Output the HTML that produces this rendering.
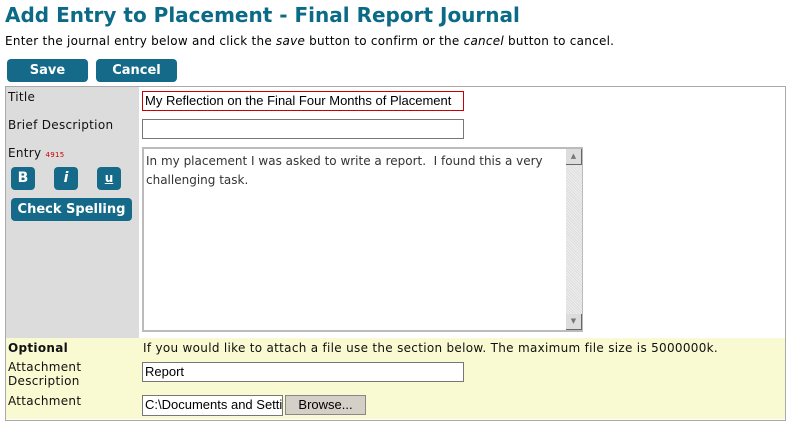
<!DOCTYPE html>
<html><head><style>
body{margin:0;width:790px;height:424px;background:#fff;font-family:"DejaVu Sans",Verdana,sans-serif;position:relative;overflow:hidden}
.a{position:absolute}
h1{position:absolute;left:5px;top:3px;margin:0;font-size:20px;font-weight:bold;color:#0b6a86;letter-spacing:0}
.btn{position:absolute;background:#156a8a;color:#fff;font-weight:bold;font-size:13px;text-align:center;border-radius:4px;font-family:"DejaVu Sans",sans-serif}
.lbl{position:absolute;font-size:12px;color:#111;letter-spacing:0.3px}
.inp{position:absolute;background:#fff;border:1px solid #777;box-sizing:border-box;font-family:"Liberation Sans",sans-serif;font-size:13px;padding:1px 2px;color:#000}
</style></head><body>
<h1>Add Entry to Placement - Final Report Journal</h1>
<div class="a" style="left:5px;top:34px;font-size:12px;letter-spacing:0.25px">Enter the journal entry below and click the <i>save</i> button to confirm or the <i>cancel</i> button to cancel.</div>
<div class="btn" style="left:7px;top:59px;width:81px;height:23px;line-height:23px">Save</div>
<div class="btn" style="left:96px;top:59px;width:81px;height:23px;line-height:23px">Cancel</div>
<div class="a" style="left:5px;top:86px;width:779px;height:333px;border:1px solid #aaa;background:#fff"></div>
<div class="a" style="left:6px;top:87px;width:133px;height:251px;background:#dcdcdc"></div>
<div class="a" style="left:6px;top:338px;width:779px;height:81px;background:#fafad2"></div>
<div class="lbl" style="left:8px;top:90px">Title</div>
<div class="lbl" style="left:8px;top:118px">Brief Description</div>
<div class="lbl" style="left:8px;top:146px">Entry <span style="color:#c00;font-size:7px">4915</span></div>
<div class="btn" style="left:11px;top:167px;width:24px;height:23px;line-height:23px;font-size:14px">B</div>
<div class="btn" style="left:54px;top:167px;width:24px;height:23px;line-height:23px;font-size:14px;font-style:italic">i</div>
<div class="btn" style="left:97px;top:167px;width:24px;height:23px;line-height:22px;font-size:12px;text-decoration:underline">u</div>
<div class="btn" style="left:11px;top:198px;width:121px;height:23px;line-height:23px">Check Spelling</div>
<div class="inp" style="left:142px;top:91px;width:322px;height:20px;border-color:#c00;line-height:16px">My Reflection on the Final Four Months of Placement</div>
<div class="inp" style="left:142px;top:119px;width:322px;height:20px"></div>
<div class="inp" style="left:142px;top:147px;width:441px;height:185px;border:2px solid #bbb;font-family:'DejaVu Sans',sans-serif;font-size:12px;line-height:19px;padding:3px 20px 0 2px;color:#333">In my placement I was asked to write a report.&nbsp; I found this a very challenging task.</div>
<div class="a" style="left:566px;top:149px;width:16px;height:181px;background:repeating-linear-gradient(45deg,#ddd 0 1px,#eee 1px 2px)"></div>
<div class="a" style="left:566px;top:149px;width:15px;height:15px;background:#ddd;border-right:1px solid #666;border-bottom:1px solid #666;color:#777;font-size:7px;text-align:center;line-height:15px">▲</div>
<div class="a" style="left:566px;top:314px;width:15px;height:15px;background:#ddd;border-right:1px solid #666;border-bottom:1px solid #666;color:#777;font-size:7px;text-align:center;line-height:15px">▼</div>
<div class="lbl" style="left:8px;top:341px;font-weight:bold">Optional</div>
<div class="lbl" style="left:143px;top:341px">If you would like to attach a file use the section below. The maximum file size is 5000000k.</div>
<div class="lbl" style="left:8px;top:360px;line-height:14px">Attachment<br>Description</div>
<div class="inp" style="left:142px;top:362px;width:322px;height:20px">Report</div>
<div class="lbl" style="left:8px;top:394px">Attachment</div>
<div class="inp" style="left:142px;top:395px;width:141px;height:21px;overflow:hidden;white-space:nowrap">C:\Documents and Settings</div>
<div class="a" style="left:285px;top:395px;width:81px;height:20px;background:#d4d0c8;border:1px solid #888;box-sizing:border-box;font-family:'Liberation Sans',sans-serif;font-size:13px;text-align:center;line-height:18px">Browse...</div>
</body></html>
